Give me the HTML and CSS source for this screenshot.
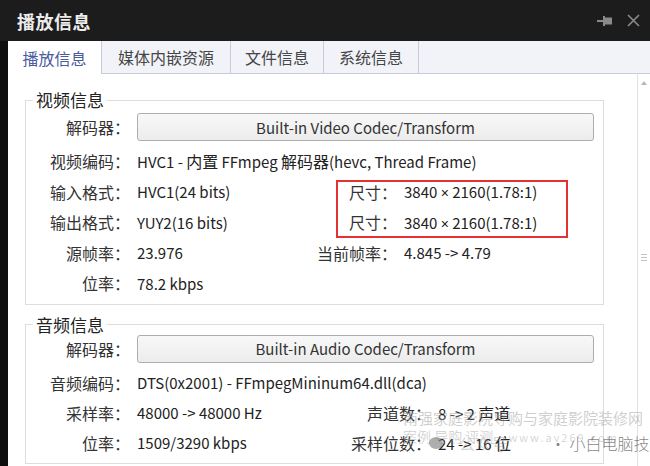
FILE: index.html
```html
<!DOCTYPE html>
<html lang="zh-CN">
<head>
  <meta charset="UTF-8">
  <title>播放信息</title>
  <link rel="stylesheet" href="styles.css">
</head>
<body>
  <div class="titlebar">
    <span class="title">播放信息</span>
    <span class="tools">
      <svg class="pin" width="16" height="12" viewBox="0 0 16 12">
        <rect x="0" y="5" width="7" height="2" fill="#8a8a8a"/>
        <rect x="6" y="1" width="2" height="10" fill="#8a8a8a"/>
        <rect x="8" y="2.5" width="7" height="7" fill="#8a8a8a"/>
      </svg>
      <svg class="close" width="13" height="13" viewBox="0 0 13 13">
        <path d="M1 1 L12 12 M12 1 L1 12" stroke="#8a8a8a" stroke-width="1.6" fill="none"/>
      </svg>
    </span>
  </div>

  <div class="main">
    <div class="tabs">
      <div class="tab active t1">播放信息</div>
      <div class="tab t2">媒体内嵌资源</div>
      <div class="tab t3">文件信息</div>
      <div class="tab t4">系统信息</div>
    </div>

    <div class="content">
      <div class="panel">
        <fieldset class="group">
          <legend>视频信息</legend>
          <div class="grid video">
            <div class="lbl">解码器：</div>
            <div class="btn">Built-in Video Codec/Transform</div>

            <div class="lbl">视频编码：</div>
            <div class="val wide">HVC1 - <span class="cjk">内置</span> FFmpeg <span class="cjk">解码器</span>(hevc, Thread Frame)</div>

            <div class="lbl">输入格式：</div>
            <div class="val">HVC1(24 bits)</div>
            <div class="lbl">尺寸：</div>
            <div class="val">3840 <span class="times">×</span> 2160(1.78:1)</div>

            <div class="lbl">输出格式：</div>
            <div class="val">YUY2(16 bits)</div>
            <div class="lbl">尺寸：</div>
            <div class="val">3840 <span class="times">×</span> 2160(1.78:1)</div>

            <div class="lbl">源帧率：</div>
            <div class="val">23.976</div>
            <div class="lbl">当前帧率：</div>
            <div class="val">4.845 -&gt; 4.79</div>

            <div class="lbl">位率：</div>
            <div class="val wide">78.2 kbps</div>
          </div>
        </fieldset>

        <fieldset class="group audio">
          <legend>音频信息</legend>
          <div class="grid sound">
            <div class="lbl">解码器：</div>
            <div class="btn">Built-in Audio Codec/Transform</div>

            <div class="lbl">音频编码：</div>
            <div class="val wide">DTS(0x2001) - FFmpegMininum64.dll(dca)</div>

            <div class="lbl">采样率：</div>
            <div class="val">48000 -&gt; 48000 Hz</div>
            <div class="lbl">声道数：</div>
            <div class="val">8 -&gt; 2 <span class="cjk">声道</span></div>

            <div class="lbl">位率：</div>
            <div class="val">1509/3290 kbps</div>
            <div class="lbl">采样位数：</div>
            <div class="val">24 -&gt; 16 <span class="cjk">位</span></div>
          </div>
        </fieldset>
      </div>

      <div class="scrollbar">
        <span class="arrow"></span>
        <span class="grip"></span>
      </div>
    </div>
  </div>

  <!-- annotation and watermark drawn over the window -->
  <div class="mark-box"></div>
  <div class="watermark">
    <div class="wm-line1">南强家庭影院导购与家庭影院装修网</div>
    <div class="wm-line2">案例 导购 评测 <span class="wm-url">www.av269.com</span></div>
    <div class="wm-line3">
      <span class="wm-icon"></span>
      <span class="wm-gzh">公众号</span>
      <span class="wm-name">· 小白电脑技</span>
    </div>
  </div>
</body>
</html>
```

FILE: styles.css
```css
body {
  margin: 0;
  background-color: #0e0e0e;
  font-family: "Noto Sans CJK SC", "Noto Sans", sans-serif;
  color: #2a2a2a;
  position: relative;
  height: 466px;
  overflow: hidden;
}
.titlebar {
  height: 41px;
  background-color: #1c1c1c;
  display: flex;
  align-items: center;
  justify-content: space-between;
  padding: 0 10px 0 17px;
}
.title {
  color: #ececec;
  font-size: 18px;
  font-weight: bold;
  letter-spacing: 0.5px;
}
.tools {
  display: flex;
  align-items: center;
  gap: 14px;
}
.main {
  margin-left: 8px;
  background-color: #fff;
  height: 425px;
}
.tabs {
  height: 32px;
  display: flex;
  background-color: #f2f3f9;
  border-bottom: 1px solid #c9cbd9;
}
.tab {
  display: flex;
  align-items: center;
  justify-content: center;
  font-size: 16px;
  color: #454545;
  border-right: 1px solid #c9cbd9;
  box-sizing: border-box;
}
.tab.active {
  color: #4a5c9c;
  background-color: #fff;
  height: 33px;
}
.t1 { width: 94px; }
.t2 { width: 129px; }
.t3 { width: 93px; }
.t4 { width: 95px; }

.content {
  display: flex;
  height: 392px;
}
.panel {
  flex: 1;
}
.group {
  margin: 16px 0 0 17px;
  width: 579px;
  box-sizing: border-box;
  border: 1px solid #dddddd;
  padding: 3px 9px 5px 0;
  min-width: 0;
}
.group legend {
  margin-left: 7px;
  padding: 0 3px;
  font-size: 17px;
  line-height: 20px;
  color: #222;
}
.group.audio {
  margin-top: 10px;
  padding-top: 0;
}
.grid {
  display: grid;
  column-gap: 7px;
  align-items: center;
  font-size: 16px;
  grid-template-rows: 33px;
}
.video {
  grid-template-columns: 104px 163px 90px 1fr;
  grid-auto-rows: 30.5px;
}
.sound {
  grid-template-columns: 104px 197px 90px 1fr;
  grid-auto-rows: 30px;
}
.lbl {
  text-align: right;
  white-space: nowrap;
  color: #333;
}
.val {
  white-space: nowrap;
  color: #222;
  font-size: 15px;
}
.val .cjk {
  font-size: 16px;
}
.times {
  font-family: "Liberation Sans", sans-serif;
  font-size: 14px;
}
.val.wide {
  grid-column: 2 / -1;
}
.btn {
  grid-column: 2 / -1;
  align-self: start;
  height: 28px;
  box-sizing: border-box;
  border: 1px solid #adadad;
  border-radius: 3px;
  background: linear-gradient(#f8f8f8, #ececec);
  display: flex;
  align-items: center;
  justify-content: center;
  color: #333;
  font-size: 15px;
}
.grid > .lbl:first-child {
  align-self: start;
  line-height: 28px;
}

.scrollbar {
  width: 12px;
  border-left: 1px solid #e2e2e2;
  position: relative;
}
.arrow {
  position: absolute;
  top: 7px;
  left: 3px;
  border-left: 3px solid transparent;
  border-right: 3px solid transparent;
  border-bottom: 4px solid #b8b8b8;
}
.grip {
  position: absolute;
  top: 180px;
  left: 3px;
  width: 6px;
  height: 5px;
  border-top: 1px solid #c4c4c4;
  border-bottom: 1px solid #c4c4c4;
}
.grip::after {
  content: "";
  position: absolute;
  top: 2px;
  left: 0;
  width: 6px;
  border-top: 1px solid #c4c4c4;
}

.mark-box {
  position: absolute;
  left: 336px;
  top: 180px;
  width: 232px;
  height: 58px;
  box-sizing: border-box;
  border: 2px solid #e23232;
}
.watermark {
  position: absolute;
  left: 403px;
  top: 408px;
  width: 247px;
  height: 58px;
  overflow: hidden;
  pointer-events: none;
  white-space: nowrap;
}
.wm-line1 {
  font-size: 15px;
  line-height: 20px;
  color: rgba(160, 160, 160, 0.5);
}
.wm-line2 {
  font-size: 14px;
  line-height: 16px;
  color: rgba(160, 160, 160, 0.45);
}
.wm-url {
  font-size: 11px;
  letter-spacing: 2px;
  margin-left: 12px;
}
.wm-line3 {
  position: absolute;
  left: 26px;
  top: 23px;
  display: flex;
  align-items: center;
}
.wm-icon {
  width: 14px;
  height: 12px;
  border-radius: 50%;
  background-color: rgba(120, 120, 120, 0.6);
  margin-right: 16px;
}
.wm-gzh {
  font-size: 16px;
  color: rgba(130, 130, 130, 0.35);
  width: 91px;
}
.wm-name {
  font-size: 16px;
  font-weight: 300;
  color: rgba(100, 100, 100, 0.8);
}
```
